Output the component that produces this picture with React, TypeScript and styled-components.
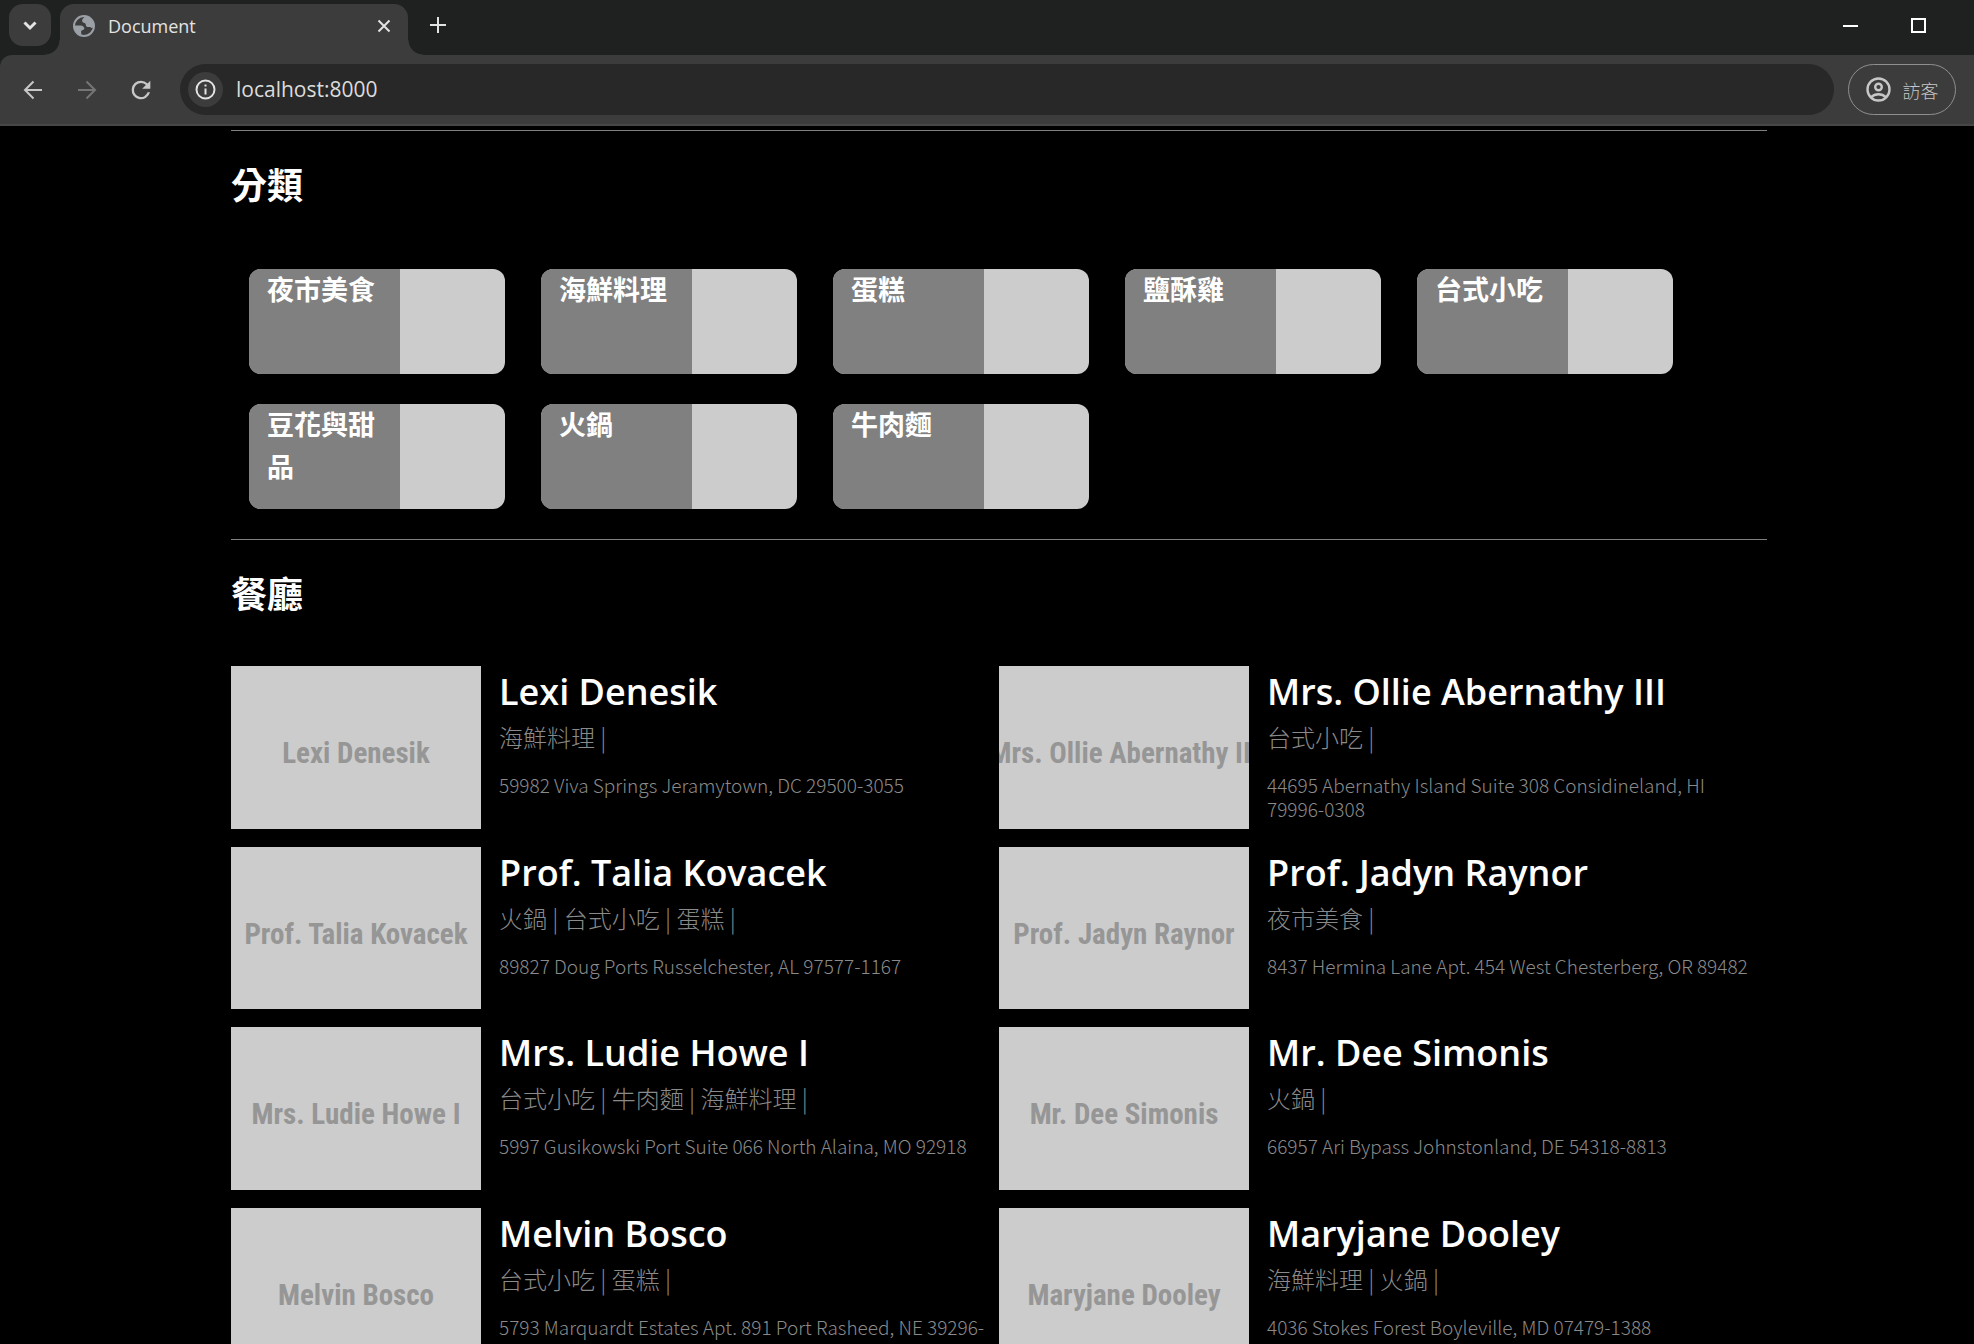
import React from 'react';
import styled, { createGlobalStyle } from 'styled-components';

const latin = '"Open Sans", "Noto Sans CJK TC", sans-serif';
const cjk = '"Noto Sans CJK TC", "Open Sans", sans-serif';

const GlobalStyle = createGlobalStyle`
  *, *::before, *::after { box-sizing: border-box; }
  html, body, #root { height: 100%; }
  body { margin: 0; background: #000; color: #fff; font-family: ${latin}; overflow: hidden; }
  h2, h3, p, ul { margin: 0; padding: 0; }
  ul { list-style: none; }
  button { border: 0; padding: 0; background: none; color: inherit; font: inherit; }
  a { color: inherit; text-decoration: none; }
`;

const Window = styled.div`
  display: flex;
  flex-direction: column;
  height: 100vh;
  overflow: hidden;
`;

const TabStrip = styled.header`
  flex: none;
  display: flex;
  height: 55px;
  padding: 4px 0 0 9px;
  background: #1f2120;
`;

const TabSearch = styled.button`
  display: grid;
  place-items: center;
  width: 42px;
  height: 42px;
  border-radius: 14px;
  background: #3c3c3c;
  color: #e3e3e3;
`;

const Tab = styled.div`
  position: relative;
  display: flex;
  align-items: center;
  width: 348px;
  height: 51px;
  margin-left: 9px;
  padding: 0 14px 8px 13px;
  gap: 13px;
  border-radius: 14px 14px 0 0;
  background: #3c3c3c;
  font-size: 18px;
  line-height: 24px;
  color: #e3e3e3;

  &::before, &::after {
    content: '';
    position: absolute;
    bottom: 0;
    width: 15px;
    height: 15px;
  }
  &::before {
    right: 100%;
    background: radial-gradient(circle at 0 0, transparent 14px, #3c3c3c 15px);
  }
  &::after {
    left: 100%;
    background: radial-gradient(circle at 100% 0, transparent 14px, #3c3c3c 15px);
  }
`;

const TabTitle = styled.span`
  flex: 1;
`;

const IconButton = styled.button<{ $size: number }>`
  display: grid;
  place-items: center;
  flex: none;
  width: ${p => p.$size}px;
  height: ${p => p.$size}px;

  &:disabled { color: #757575; }
`;

const NewTab = styled(IconButton)`
  margin-left: 9px;
  color: #e3e3e3;
`;

const WindowControls = styled.div`
  display: flex;
  margin-left: auto;
  padding-right: 35px;
  gap: 26px;
`;

const ToolbarArea = styled.div`
  flex: none;
  background: #1f2120;
`;

const Toolbar = styled.nav`
  display: flex;
  align-items: center;
  height: 71px;
  padding: 0 18px 0 13px;
  gap: 14px;
  border-top-left-radius: 12px;
  background: #3c3c3c;
  border-bottom: 2px solid #474747;
  color: #c7c7c7;
`;

const AddressBar = styled.div`
  flex: 1;
  display: flex;
  align-items: center;
  height: 51px;
  margin-left: 5px;
  padding-left: 8px;
  gap: 13px;
  border-radius: 26px;
  background: #282828;
`;

const SiteInfo = styled.button`
  display: grid;
  place-items: center;
  width: 35px;
  height: 35px;
  border-radius: 50%;
  background: #3c3c3c;
  color: #e3e3e3;
`;

const Address = styled.input`
  flex: 1;
  height: 36px;
  padding: 0 0 2px;
  border: 0;
  outline: 0;
  background: none;
  color: #dcdcdc;
  font-family: ${latin};
  font-size: 21px;
`;

const Profile = styled.button`
  display: flex;
  align-items: center;
  justify-content: center;
  width: 108px;
  height: 51px;
  gap: 12px;
  border: 1px solid #8f8f8f;
  border-radius: 26px;
  font-family: ${cjk};
  font-size: 18px;
  line-height: 24px;
  font-weight: 300;
`;

const Page = styled.main`
  flex: 1;
  min-height: 0;
  overflow: hidden;
  padding: 4px 207px 0 231px;
`;

const Section = styled.section`
  border-top: 1px solid #808080;
`;

const Heading = styled.h2`
  padding: 28px 0 36px;
  font-size: 36px;
  line-height: 54px;
  font-weight: 700;
`;

const Categories = styled.ul`
  display: flex;
  flex-wrap: wrap;
  padding: 20px 18px 30px;
  gap: 30px 36px;
`;

const Category = styled.a`
  display: flex;
  width: 256px;
  height: 105px;
  border-radius: 12px;
  overflow: hidden;
  background: #ccc;
`;

const CategoryName = styled.h3`
  width: 151px;
  padding: 0 18px;
  background: #808080;
  font-size: 27px;
  line-height: 42px;
  font-weight: 700;
  word-break: break-all;
`;

const Restaurants = styled.ul`
  display: grid;
  grid-template-columns: 1fr 1fr;
  padding-top: 8px;
  row-gap: 18px;
`;

const Restaurant = styled.li`
  display: flex;
  align-items: flex-start;
  gap: 18px;
`;

const Photo = styled.div`
  flex: none;
  display: flex;
  align-items: center;
  justify-content: center;
  width: 250px;
  aspect-ratio: 20 / 13;
  padding-top: 12px;
  overflow: hidden;
  background: #ccc;
  color: #969696;
  font-family: "Roboto Condensed", Roboto, sans-serif;
  font-size: 29px;
  font-weight: 700;
  white-space: nowrap;
`;

const Details = styled.div`
  flex: 1;
  min-width: 0;
  color: #8a8a8a;
`;

const Name = styled.h3`
  padding-bottom: 1px;
  font-size: 36px;
  line-height: 52px;
  font-weight: 600;
  color: #fff;
`;

const Tags = styled.p`
  font-family: ${cjk};
  font-size: 24px;
  line-height: 36px;
  font-weight: 300;
`;

const Street = styled.p`
  padding: 18px 8px 0 0;
  font-family: ${cjk};
  font-size: 19px;
  line-height: 24px;
  font-weight: 300;
`;

const categories = ['夜市美食', '海鮮料理', '蛋糕', '鹽酥雞', '台式小吃', '豆花與甜品', '火鍋', '牛肉麵'];

const restaurants = [
  { name: 'Lexi Denesik', tags: ['海鮮料理'], address: '59982 Viva Springs Jeramytown, DC 29500-3055' },
  { name: 'Mrs. Ollie Abernathy III', tags: ['台式小吃'], address: '44695 Abernathy Island Suite 308 Considineland, HI 79996-0308' },
  { name: 'Prof. Talia Kovacek', tags: ['火鍋', '台式小吃', '蛋糕'], address: '89827 Doug Ports Russelchester, AL 97577-1167' },
  { name: 'Prof. Jadyn Raynor', tags: ['夜市美食'], address: '8437 Hermina Lane Apt. 454 West Chesterberg, OR 89482' },
  { name: 'Mrs. Ludie Howe I', tags: ['台式小吃', '牛肉麵', '海鮮料理'], address: '5997 Gusikowski Port Suite 066 North Alaina, MO 92918' },
  { name: 'Mr. Dee Simonis', tags: ['火鍋'], address: '66957 Ari Bypass Johnstonland, DE 54318-8813' },
  { name: 'Melvin Bosco', tags: ['台式小吃', '蛋糕'], address: '5793 Marquardt Estates Apt. 891 Port Rasheed, NE 39296-' },
  { name: 'Maryjane Dooley', tags: ['海鮮料理', '火鍋'], address: '4036 Stokes Forest Boyleville, MD 07479-1388' },
];

const Stroke = ({ d, size, width = 2 }: { d: string; size: number; width?: number }) => (
  <svg width={size} height={size} viewBox={`0 0 ${size} ${size}`} fill="none" stroke="currentColor" strokeWidth={width} aria-hidden="true">
    <path d={d} />
  </svg>
);

const Globe = () => (
  <svg width="22" height="22" viewBox="0 0 22 22" aria-hidden="true">
    <circle cx="11" cy="11" r="10" fill="none" stroke="#9aa0a6" strokeWidth="2" />
    <path fill="#9aa0a6" d="M12 1.500C9.500 3.500 8.500 5 9.500 7c.6 1 2 .8 2.800 1.500.9.9.2 2.500 1.500 3.200 1.400.7 3.700-.4 4.700 1.300l2-.5C22 6 17 1 12 1.500zM1.500 10.500h6c2.300.2 4 1.500 3.800 3.300-.2 1.400-2.300 1-3 2.200-.5 1 .2 2.500 0 4C3.500 18.500 1 14.500 1.500 10.500z" />
  </svg>
);

const Reload = () => (
  <svg width="28" height="28" viewBox="0 0 24 24" fill="currentColor" aria-hidden="true">
    <path d="M17.650 6.350A7.958 7.958 0 0 0 12 4a8 8 0 1 0 7.730 10h-2.080A6 6 0 1 1 12 6c1.660 0 3.140.69 4.220 1.780L13 11h7V4l-2.350 2.350z" />
  </svg>
);

const Info = () => (
  <svg width="21" height="21" viewBox="0 0 21 21" fill="none" stroke="currentColor" strokeWidth="2" aria-hidden="true">
    <circle cx="10.500" cy="10.500" r="9" />
    <path d="M10.500 9.500v6M10.500 5.500v2" />
  </svg>
);

const Person = () => (
  <svg width="25" height="25" viewBox="0 0 25 25" fill="none" stroke="currentColor" strokeWidth="2.400" aria-hidden="true">
    <circle cx="12.500" cy="12.500" r="11" />
    <circle cx="12.500" cy="10" r="3.300" />
    <path d="M5 20.200c4-4 11-4 15 0" />
  </svg>
);

export default function App() {
  return (
    <Window>
      <GlobalStyle />
      <TabStrip>
        <TabSearch aria-label="Search tabs"><Stroke size={16} width={3} d="M2.500 5.500l5.500 5.500 5.500-5.500" /></TabSearch>
        <Tab>
          <Globe />
          <TabTitle>Document</TabTitle>
          <IconButton $size={20} aria-label="Close tab"><Stroke size={14} d="M1.500 1.500l11 11M12.500 1.500l-11 11" /></IconButton>
        </Tab>
        <NewTab $size={42} aria-label="New tab"><Stroke size={16} d="M8 0v16M0 8h16" /></NewTab>
        <WindowControls>
          <IconButton $size={42} aria-label="Minimize"><Stroke size={15} d="M0 8h15" /></IconButton>
          <IconButton $size={42} aria-label="Maximize"><Stroke size={15} d="M1 1h13v13H1z" /></IconButton>
        </WindowControls>
      </TabStrip>
      <ToolbarArea>
        <Toolbar>
          <IconButton $size={40} aria-label="Back"><Stroke size={20} d="M19 10H2M10.500 1.500L2 10l8.500 8.500" /></IconButton>
          <IconButton $size={40} aria-label="Forward" disabled><Stroke size={20} d="M1 10h17M9.500 1.500L18 10l-8.500 8.500" /></IconButton>
          <IconButton $size={40} aria-label="Reload"><Reload /></IconButton>
          <AddressBar>
            <SiteInfo aria-label="Site information"><Info /></SiteInfo>
            <Address aria-label="Address" defaultValue="localhost:8000" />
          </AddressBar>
          <Profile><Person />訪客</Profile>
        </Toolbar>
      </ToolbarArea>
      <Page>
        <Section>
          <Heading>分類</Heading>
          <Categories>
            {categories.map(c => (
              <li key={c}><Category href="#"><CategoryName>{c}</CategoryName></Category></li>
            ))}
          </Categories>
        </Section>
        <Section>
          <Heading>餐廳</Heading>
          <Restaurants>
            {restaurants.map(r => (
              <Restaurant key={r.name}>
                <Photo>{r.name}</Photo>
                <Details>
                  <Name>{r.name}</Name>
                  <Tags>{r.tags.map(t => `${t} | `).join('')}</Tags>
                  <Street>{r.address}</Street>
                </Details>
              </Restaurant>
            ))}
          </Restaurants>
        </Section>
      </Page>
    </Window>
  );
}
